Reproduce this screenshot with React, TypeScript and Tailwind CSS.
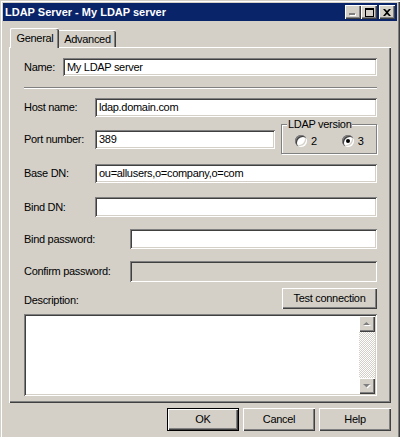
const raised =
	'shadow-[inset_1px_1px_0_#ffffff,inset_-1px_-1px_0_#404040,inset_-2px_-2px_0_#808080]';
const sunken =
	'shadow-[inset_1px_1px_0_#808080,inset_-1px_-1px_0_#ffffff,inset_2px_2px_0_#404040,inset_-2px_-2px_0_#d4d0c8]';

function Field({
	value = '',
	className = '',
	disabled = false,
}: {
	value?: string;
	className?: string;
	disabled?: boolean;
}) {
	return (
		<div
			className={`${sunken} ${disabled ? 'bg-[#d4d0c8]' : 'bg-white'} flex items-center pl-[4px] ${className}`}
		>
			{value}
		</div>
	);
}

function Radio({ checked = false }: { checked?: boolean }) {
	return (
		<div className="w-[12px] h-[12px] rounded-full bg-white shadow-[inset_1px_1px_0_#808080,inset_2px_2px_0_#404040,inset_-1px_-1px_0_#ffffff,inset_-2px_-2px_0_#d4d0c8] flex items-center justify-center">
			{checked && <div className="w-[4px] h-[4px] rounded-full bg-black" />}
		</div>
	);
}

function Button({
	label,
	isDefault = false,
	className = '',
}: {
	label: string;
	isDefault?: boolean;
	className?: string;
}) {
	return (
		<div
			className={`flex items-center justify-center bg-[#d4d0c8] ${
				isDefault
					? 'border border-black shadow-[inset_1px_1px_0_#ffffff,inset_-1px_-1px_0_#404040,inset_-2px_-2px_0_#808080]'
					: raised
			} ${className}`}
		>
			{label}
		</div>
	);
}

function TitleBar() {
	return (
		<div className="h-[18px] bg-[#0a246a] flex items-center pl-[2px] pr-[2px]">
			<span className="text-white font-bold tracking-normal">LDAP Server - My LDAP server</span>
			<div className="ml-auto flex items-center">
				{/* minimize (disabled) */}
				<div className={`w-[16px] h-[14px] bg-[#d4d0c8] ${raised} flex items-end justify-center pb-[3px]`}>
					<svg width="8" height="3" viewBox="0 0 8 3">
						<rect x="0" y="0" width="6" height="2" fill="#808080" />
						<rect x="1" y="2" width="6" height="1" fill="#ffffff" />
						<rect x="6" y="1" width="1" height="1" fill="#ffffff" />
					</svg>
				</div>
				{/* maximize */}
				<div className={`w-[16px] h-[14px] bg-[#d4d0c8] ${raised} flex items-center justify-center`}>
					<svg width="9" height="9" viewBox="0 0 9 9">
						<path d="M0 0h9v2H0z M0 0h1v9H0z M8 0h1v9H8z M0 8h9v1H0z" fill="#000" />
					</svg>
				</div>
				{/* close */}
				<div className={`ml-[2px] w-[16px] h-[14px] bg-[#d4d0c8] ${raised} flex items-center justify-center`}>
					<svg width="8" height="7" viewBox="0 0 8 7">
						<path
							d="M0 0h2l2 2 2-2h2L5 3.5 8 7H6L4 5 2 7H0l3-3.5z"
							fill="#000"
						/>
					</svg>
				</div>
			</div>
		</div>
	);
}

function ScrollArrow({ up }: { up: boolean }) {
	return (
		<div className={`h-[16px] bg-[#d4d0c8] ${raised} flex items-center justify-center`}>
			<svg width="8" height="5" viewBox="0 0 8 5">
				{up ? (
					<>
						<path d="M1 4h7L4.5 0.5z" fill="#ffffff" />
						<path d="M0 3h7L3.5 0z" fill="#808080" />
					</>
				) : (
					<>
						<path d="M1 1h7L4.5 4.5z" fill="#ffffff" />
						<path d="M0 0h7L3.5 3.5z" fill="#808080" />
					</>
				)}
			</svg>
		</div>
	);
}

export default function App() {
	return (
		<div className="w-[400px] h-[437px] bg-[#d4d0c8] p-[3px] flex flex-col overflow-hidden font-['Liberation_Sans',Arial,sans-serif] text-[11px] text-black tracking-[-0.3px] shadow-[inset_1px_1px_0_#d4d0c8,inset_2px_2px_0_#ffffff,inset_-1px_0_0_#404040,inset_-2px_0_0_#808080]">
			<TitleBar />

			<div className="flex flex-col px-[6px]">
				{/* Tabs */}
				<div className="mt-[7px] h-[19px] flex items-end">
					<div className="relative z-10 ml-[1px] mb-[-1px] w-[49px] h-[20px] bg-[#d4d0c8] border-t border-l border-white rounded-tl-[2px] rounded-tr-[2px] shadow-[inset_-1px_0_0_#404040,inset_-2px_0_0_#808080] flex items-center justify-center pb-[1px]">
						General
					</div>
					<div className="w-[57px] h-[17px] bg-[#d4d0c8] border-t border-white rounded-tr-[2px] shadow-[inset_-1px_0_0_#404040,inset_-2px_0_0_#808080] flex items-center justify-center">
						Advanced
					</div>
				</div>

				{/* Panel */}
				<div className="h-[356px] border-t border-l border-white shadow-[inset_-1px_-1px_0_#404040,inset_-2px_-2px_0_#808080] flex flex-col pl-[14px] pr-[14px]">
					<div className="mt-[10px] flex items-center h-[18px]">
						<div className="w-[39px] shrink-0">Name:</div>
						<Field value="My LDAP server" className="flex-1 h-[18px]" />
					</div>

					<div className="mt-[11px] h-[2px] border-t border-[#808080] border-b border-b-white" />

					<div className="mt-[9px] flex items-center h-[19px]">
						<div className="w-[71px] shrink-0">Host name:</div>
						<Field value="ldap.domain.com" className="flex-1 h-[19px]" />
					</div>

					<div className="mt-[1px] flex items-start">
						<div className="mt-[12px] h-[19px] w-[71px] shrink-0 flex items-center">
							Port number:
						</div>
						<Field value="389" className="mt-[12px] w-[180px] h-[19px]" />
						<fieldset className="ml-auto w-[96px] h-[36px] border border-[#808080] shadow-[inset_1px_1px_0_#ffffff,1px_1px_0_#ffffff] px-[5px]">
							<legend className="px-[1px] bg-[#d4d0c8] leading-[12px]">LDAP version</legend>
							<div className="flex items-center pl-[8px] mt-[3px]">
								<Radio />
								<span className="ml-[4px]">2</span>
								<div className="ml-[25px]">
									<Radio checked />
								</div>
								<span className="ml-[4px]">3</span>
							</div>
						</fieldset>
					</div>

					<div className="mt-[10px] flex items-center h-[19px]">
						<div className="w-[71px] shrink-0">Base DN:</div>
						<Field value="ou=allusers,o=company,o=com" className="flex-1 h-[19px]" />
					</div>

					<div className="mt-[14px] flex items-center h-[20px]">
						<div className="w-[71px] shrink-0">Bind DN:</div>
						<Field className="flex-1 h-[20px]" />
					</div>

					<div className="mt-[12px] flex items-center h-[20px]">
						<div className="w-[106px] shrink-0">Bind password:</div>
						<Field className="flex-1 h-[20px]" />
					</div>

					<div className="mt-[12px] flex items-center h-[21px]">
						<div className="w-[106px] shrink-0">Confirm password:</div>
						<Field disabled className="flex-1 h-[21px]" />
					</div>

					<div className="mt-[6px] flex items-end">
						<div className="pb-[1px]">Description:</div>
						<Button label="Test connection" className="ml-auto w-[95px] h-[21px]" />
					</div>

					<div className={`mt-[5px] h-[82px] bg-white ${sunken} p-[2px] flex justify-end`}>
						<div className="w-[16px] flex flex-col">
							<ScrollArrow up />
							<div className="flex-1 bg-[repeating-conic-gradient(#ffffff_0_25%,#d4d0c8_0_50%)] bg-[length:2px_2px]" />
							<ScrollArrow up={false} />
						</div>
					</div>
				</div>

				{/* Dialog buttons */}
				<div className="mt-[5px] flex justify-end gap-[4px]">
					<Button label="OK" isDefault className="w-[72px] h-[23px]" />
					<Button label="Cancel" className="w-[72px] h-[23px]" />
					<Button label="Help" className="w-[72px] h-[23px]" />
				</div>
			</div>
		</div>
	);
}
